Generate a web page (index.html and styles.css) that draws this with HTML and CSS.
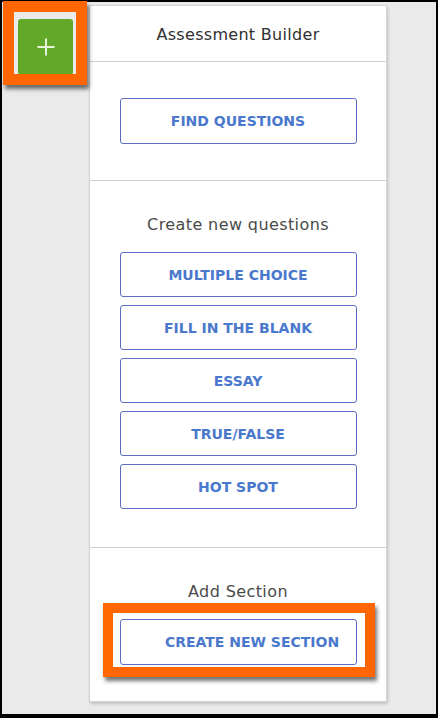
FILE: index.html
```html
<!DOCTYPE html>
<html>
<head>
<meta charset="utf-8">
<link rel="stylesheet" href="styles.css">
</head>
<body>
<div class="screen">
  <button class="add-btn" aria-label="Add">
    <svg width="20" height="20" viewBox="0 0 20 20"><path d="M10 1.5v17M1.5 10h17" stroke="#e6f3da" stroke-width="2" fill="none"/></svg>
  </button>
  <div class="panel">
    <div class="header">Assessment Builder</div>
    <div class="section find">
      <button class="opt">FIND QUESTIONS</button>
    </div>
    <div class="section create">
      <div class="label">Create new questions</div>
      <div class="list">
        <button class="opt">MULTIPLE CHOICE</button>
        <button class="opt">FILL IN THE BLANK</button>
        <button class="opt">ESSAY</button>
        <button class="opt">TRUE/FALSE</button>
        <button class="opt">HOT SPOT</button>
      </div>
    </div>
    <div class="section add">
      <div class="label">Add Section</div>
      <button class="opt shifted">CREATE NEW SECTION</button>
    </div>
  </div>
  <div class="hl hl-add"></div>
  <div class="hl hl-section"></div>
</div>
</body>
</html>
```
FILE: styles.css
```css
html, body {
  margin: 0;
  padding: 0;
  background: #000;
}
.screen {
  position: relative;
  box-sizing: border-box;
  width: 434px;
  height: 712px;
  margin: 2px 2px 4px 2px;
  background: #eaeaea;
  display: flex;
  align-items: flex-start;
  padding-top: 3px;
  font-family: "DejaVu Sans", "Liberation Sans", sans-serif;
}
.add-btn {
  margin: 14px 0 0 16px;
  width: 55px;
  height: 56px;
  border: none;
  border-radius: 3px;
  background: #62a829;
  display: flex;
  align-items: center;
  justify-content: center;
  padding: 0;
  flex: none;
}
.panel {
  margin-left: 16px;
  width: 298px;
  height: 697px;
  box-sizing: border-box;
  background: #fff;
  border: 1px solid #d4d4d4;
  box-shadow: 1px 2px 3px rgba(0,0,0,0.18);
  display: flex;
  flex-direction: column;
}
.header {
  height: 56px;
  display: flex;
  align-items: center;
  justify-content: center;
  font-size: 16px;
  letter-spacing: 0.3px;
  color: #2f2f2f;
  border-bottom: 1px solid #cfcfcf;
  padding-top: 2px;
  box-sizing: border-box;
}
.section {
  display: flex;
  flex-direction: column;
  align-items: center;
  border-bottom: 1px solid #cfcfcf;
}
.find {
  height: 119px;
  box-sizing: border-box;
  padding-top: 36px;
}
.create {
  height: 367px;
  box-sizing: border-box;
  padding-top: 34px;
}
.add {
  flex: 1;
  border-bottom: none;
  padding-top: 34px;
}
.label {
  font-size: 16px;
  letter-spacing: 0.4px;
  color: #4a4a4a;
  line-height: 20px;
  margin-bottom: 17px;
}
.add .label {
  margin-bottom: 17px;
}
.list {
  display: flex;
  flex-direction: column;
  gap: 8px;
}
.opt {
  width: 237px;
  height: 46px;
  box-sizing: border-box;
  background: #fff;
  border: 1.5px solid #5b6cc2;
  border-radius: 3px;
  color: #4a78cc;
  font-family: "DejaVu Sans", "Liberation Sans", sans-serif;
  font-weight: 700;
  font-size: 14px;
  padding: 0;
  flex: none;
}
.list .opt {
  height: 45px;
}
.opt.shifted {
  padding-left: 28px;
}
.hl {
  position: absolute;
  box-sizing: border-box;
  border: 11px solid #ff6600;
  box-shadow: 2px 4px 4px rgba(0,0,0,0.55);
}
.hl-add {
  left: 1px;
  top: -1px;
  width: 84px;
  height: 84px;
}
.hl-section {
  left: 101px;
  top: 601px;
  width: 272px;
  height: 74px;
  border-width: 10px;
}
```
